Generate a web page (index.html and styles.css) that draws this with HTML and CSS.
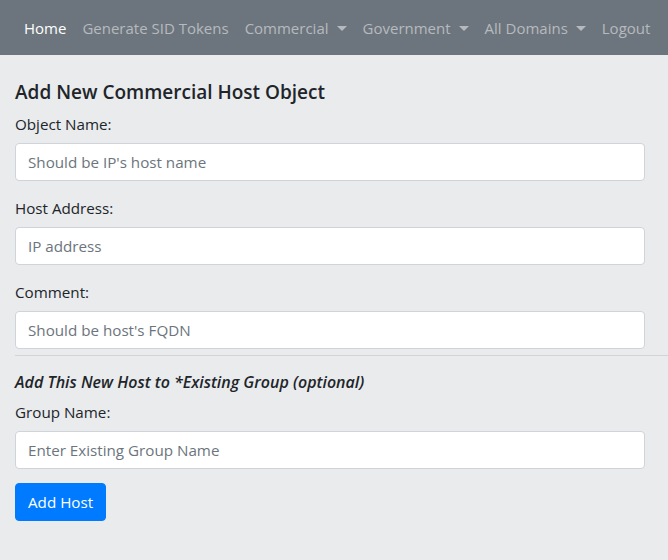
FILE: index.html
```html
<!DOCTYPE html>
<html>
<head>
<meta charset="utf-8">
<link rel="stylesheet" href="styles.css">
</head>
<body>
<nav class="navbar">
  <a class="nav-link active" href="#">Home</a>
  <a class="nav-link" href="#">Generate SID Tokens</a>
  <a class="nav-link dropdown" href="#">Commercial</a>
  <a class="nav-link dropdown" href="#">Government</a>
  <a class="nav-link dropdown" href="#">All Domains</a>
  <a class="nav-link" href="#">Logout</a>
</nav>
<main class="content">
  <h5 class="title">Add New Commercial Host Object</h5>
  <div class="form-group">
    <label class="label">Object Name:</label>
    <input class="input" type="text" placeholder="Should be IP's host name">
  </div>
  <div class="form-group">
    <label class="label">Host Address:</label>
    <input class="input" type="text" placeholder="IP address">
  </div>
  <div class="form-group last">
    <label class="label">Comment:</label>
    <input class="input" type="text" placeholder="Should be host's FQDN">
  </div>
  <hr class="divider">
  <p class="subtitle">Add This New Host to *Existing Group (optional)</p>
  <div class="form-group group-final">
    <label class="label">Group Name:</label>
    <input class="input" type="text" placeholder="Enter Existing Group Name">
  </div>
  <button class="btn" type="button">Add Host</button>
</main>
</body>
</html>
```

FILE: styles.css
```css
* { box-sizing: border-box; }
html, body {
  margin: 0;
  padding: 0;
  background: #e9ebed;
  font-family: "Open Sans", "Noto Sans", sans-serif;
  color: #212529;
  font-size: 15.2px;
  overflow: hidden;
}
.navbar {
  display: flex;
  align-items: center;
  height: 55px;
  padding: 0 16px;
  background: #6c757d;
}
.nav-link {
  padding: 0 8px;
  color: #b6babe;
  text-decoration: none;
  font-size: 15px;
  line-height: 24px;
  white-space: nowrap;
}
.nav-link.active { color: #ffffff; }
.dropdown::after {
  content: "";
  display: inline-block;
  margin-left: 8px;
  vertical-align: 3px;
  border-top: 5px solid;
  border-left: 5px solid transparent;
  border-right: 5px solid transparent;
}
.content {
  padding: 25px 23px 0 15px;
}
.title {
  margin: 0 0 8px;
  font-size: 19px;
  line-height: 24px;
  font-weight: 600;
}
.form-group {
  display: flex;
  flex-direction: column;
  margin-bottom: 15px;
}
.form-group.last { margin-bottom: 0; }
.form-group.group-final { margin-bottom: 14px; }
.label {
  line-height: 24px;
  margin-bottom: 7px;
}
.input {
  height: 38px;
  width: 100%;
  padding: 6px 12px;
  font-family: inherit;
  font-size: 15.2px;
  color: #495057;
  background: #fff;
  border: 1px solid #ced4da;
  border-radius: 4px;
}
.input::placeholder { color: #6c757d; opacity: 1; }
.divider {
  margin: 6px -23px 0 0;
  border: 0;
  border-top: 1px solid #d2d5d8;
}
.subtitle {
  margin: 14px 0 6px;
  font-size: 16px;
  font-style: italic;
  font-weight: 600;
  line-height: 24px;
}
.btn {
  height: 38px;
  padding: 6px 12px;
  font-family: inherit;
  font-size: 15.2px;
  color: #fff;
  background: #007bff;
  border: 1px solid #007bff;
  border-radius: 4px;
}
```
